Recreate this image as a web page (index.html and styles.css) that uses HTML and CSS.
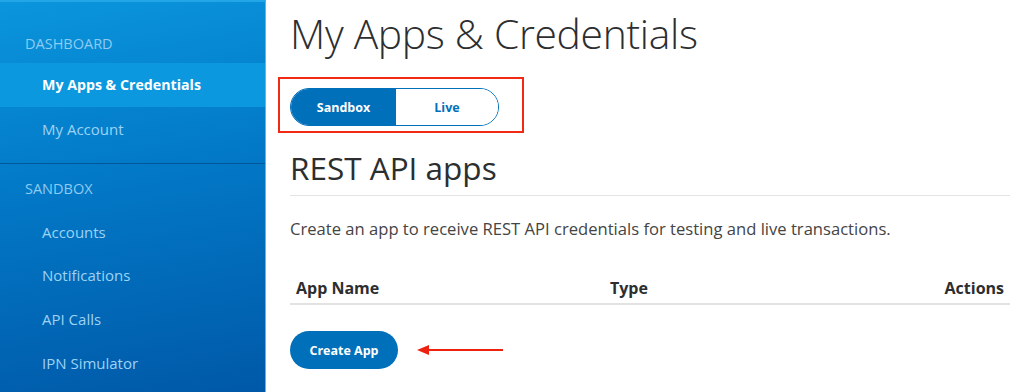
FILE: index.html
```html
<!DOCTYPE html>
<html lang="en">
<head>
  <meta charset="UTF-8" />
  <meta name="viewport" content="width=device-width, initial-scale=1.0" />
  <title>My Apps &amp; Credentials</title>
  <link rel="stylesheet" href="styles.css">
</head>
<body>
  <div class="layout">
    <nav class="sidebar">
      <div class="nav-group">
        <div class="nav-title">DASHBOARD</div>
        <a class="nav-item active" href="#">My Apps &amp; Credentials</a>
        <a class="nav-item" href="#">My Account</a>
      </div>
      <div class="nav-group">
        <div class="nav-title">SANDBOX</div>
        <a class="nav-item" href="#">Accounts</a>
        <a class="nav-item" href="#">Notifications</a>
        <a class="nav-item" href="#">API Calls</a>
        <a class="nav-item" href="#">IPN Simulator</a>
      </div>
    </nav>

    <main class="content">
      <h1>My Apps &amp; Credentials</h1>

      <div class="highlight">
        <div class="toggle">
          <button class="toggle-btn selected">Sandbox</button>
          <button class="toggle-btn">Live</button>
        </div>
      </div>

      <h2>REST API apps</h2>
      <p class="intro">Create an app to receive REST API credentials for testing and live transactions.</p>

      <table class="apps">
        <thead>
          <tr>
            <th class="col-name">App Name</th>
            <th class="col-type">Type</th>
            <th class="col-actions">Actions</th>
          </tr>
        </thead>
      </table>

      <div class="create-row">
        <button class="create-btn">Create App</button>
        <svg class="arrow" width="90" height="14" viewBox="0 0 90 14">
          <line x1="10" y1="7" x2="87" y2="7" stroke="#ee2211" stroke-width="2" />
          <path d="M1 7 L13 2 L13 12 Z" fill="#ee2211" />
        </svg>
      </div>
    </main>
  </div>
</body>
</html>
```

FILE: styles.css
```css
* {
  box-sizing: border-box;
}
body {
  margin: 0;
  font-family: 'Open Sans', 'Noto Sans', sans-serif;
  color: #2c2e2f;
  background: #fff;
}
.layout {
  display: flex;
  height: 392px;
  overflow: hidden;
}
.sidebar {
  width: 266px;
  flex-shrink: 0;
  background: linear-gradient(170deg, #0a95dc 0%, #0278c6 45%, #0059a8 100%);
  border-top: 2px solid #23a6e8;
  border-right: 1px solid #5fb6ea;
}
.nav-group {
  padding-top: 23px;
  padding-bottom: 12px;
}
.nav-group + .nav-group {
  border-top: 1px solid #04569a;
  padding-top: 6px;
}
.nav-group + .nav-group .nav-title {
  margin-bottom: 2px;
}
.nav-title {
  color: #8fcbf2;
  font-size: 14.5px;
  padding: 0 25px;
  height: 38px;
  line-height: 38px;
}
.nav-item {
  display: block;
  color: #9dd3f5;
  text-decoration: none;
  font-size: 15px;
  padding: 0 42px;
  height: 43.7px;
  line-height: 44px;
}
.nav-item.active {
  height: 44px;
  background: #0b98de;
  color: #fff;
  font-weight: 700;
  font-size: 14.2px;
}
.content {
  flex: 1;
  padding: 0 14px 0 24px;
}
h1 {
  margin: 7px 0 0;
  font-size: 40.8px;
  font-weight: 300;
  color: #2c2e2f;
  line-height: 52px;
  letter-spacing: -0.3px;
}
.highlight {
  display: inline-block;
  margin: 18px 0 0 -12px;
  padding: 9px 23px 5px 10px;
  border: 2px solid #f02a14;
}
.toggle {
  display: flex;
  width: 209px;
  height: 38px;
  border: 1px solid #0070ba;
  border-radius: 20px;
  overflow: hidden;
}
.toggle-btn {
  flex: 1;
  border: none;
  background: #fff;
  color: #0070ba;
  font-family: inherit;
  font-size: 12.5px;
  font-weight: 700;
  cursor: pointer;
}
.toggle-btn.selected {
  flex: 0 0 105px;
  background: #0070ba;
  color: #fff;
}
h2 {
  margin: 15px 0 0;
  font-size: 31.5px;
  font-weight: 400;
  line-height: 40px;
  padding-bottom: 7px;
  border-bottom: 1px solid #e4e4e4;
}
.intro {
  margin: 20px 0 0;
  font-size: 16.6px;
  line-height: 26px;
  color: #444;
}
.apps {
  width: 100%;
  margin-top: 31px;
  border-collapse: collapse;
}
.apps th {
  font-size: 16px;
  font-weight: 700;
  text-align: left;
  line-height: 22px;
  padding: 4px 6px 4px;
  border-bottom: 2px solid #e2e2e2;
}
.apps .col-name {
  width: 314px;
}
.apps .col-actions {
  text-align: right;
}
.create-row {
  display: flex;
  align-items: center;
  gap: 18px;
  margin-top: 26px;
}
.create-btn {
  width: 108px;
  height: 38px;
  border: none;
  border-radius: 19px;
  background: #0070ba;
  color: #fff;
  font-family: inherit;
  font-size: 12.5px;
  font-weight: 700;
  cursor: pointer;
}
```
